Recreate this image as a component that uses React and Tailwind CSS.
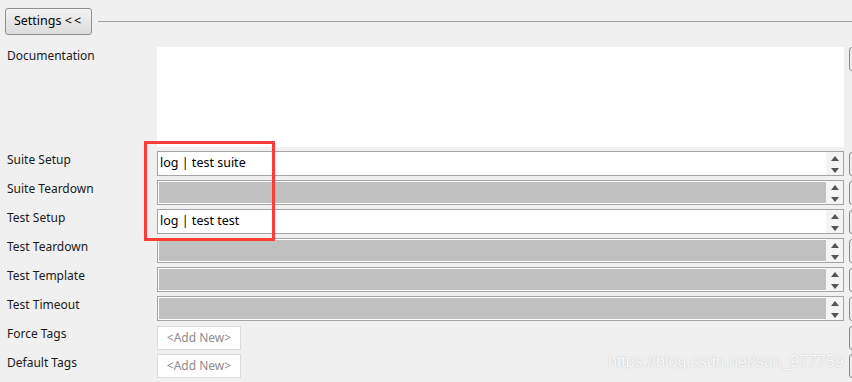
import { useState } from 'react';

const font = { fontFamily: '"Noto Sans", "Liberation Sans", sans-serif' };

function Spin() {
  return (
    <div className="flex flex-col items-center justify-between w-[17px] self-stretch bg-[#f4f4f4] pt-[4px] pb-[2px]">
      <svg width="8" height="5" viewBox="0 0 8 5">
        <polygon points="4,0 8,5 0,5" fill="#555555" />
      </svg>
      <svg width="8" height="5" viewBox="0 0 8 5">
        <polygon points="0,0 8,0 4,5" fill="#555555" />
      </svg>
    </div>
  );
}

function SideButton() {
  return <div className="w-[15px] h-[24px] shrink-0 border border-[#8a8a8a] rounded-[3px] bg-[#ececec]" />;
}

function Field({ value, disabled }) {
  return (
    <div className="flex items-center gap-[5px]">
      <div
        className={`flex-1 flex h-[25px] border border-[#a5a5a5] ${
          disabled ? 'bg-[#c0c0c0] shadow-[inset_0_0_0_1px_#ffffff]' : 'bg-white'
        }`}
      >
        <div className="flex-1 flex items-center pl-[2px] text-[12.5px] text-black">{value}</div>
        <Spin />
      </div>
      <SideButton />
    </div>
  );
}

function AddNew() {
  return (
    <div className="w-[84px] h-[24px] bg-white border border-[#dcdcdc] flex items-center justify-center text-[12px] text-[#8c8c8c]">
      &lt;Add New&gt;
    </div>
  );
}

export default function App() {
  const [open, setOpen] = useState(true);

  const rows = [
    { label: 'Suite Setup', value: 'log | test suite' },
    { label: 'Suite Teardown', disabled: true },
    { label: 'Test Setup', value: 'log | test test' },
    { label: 'Test Teardown', disabled: true },
    { label: 'Test Template', disabled: true },
    { label: 'Test Timeout', disabled: true },
  ];

  return (
    <div className="relative w-[852px] h-[382px] overflow-hidden bg-[#f0f0f0] text-[#1a1a1a]" style={font}>
      {/* Header */}
      <div className="flex items-center pt-[8px] pl-[5px]">
        <button
          onClick={() => setOpen(!open)}
          className="w-[87px] h-[27px] rounded-[3px] border border-[#8e8f8f] bg-gradient-to-b from-[#f3f3f3] to-[#dcdcdc] text-[12.5px] text-black"
        >
          Settings <span className="tracking-[2px]">&lt;&lt;</span>
        </button>
        <div className="flex-1 ml-[6px] h-px bg-[#a0a0a0]" />
      </div>

      {/* Form */}
      <div className="grid grid-cols-[157px_1fr] mt-[12px] text-[12px] gap-y-[4px]">
        <div className="pl-[7px] pt-[1px] leading-[16px]">Documentation</div>
        <div className="flex gap-[5px] mr-[-12px]">
          <div className="flex-1 h-[100px] bg-white" />
          <SideButton />
        </div>

        {rows.map((r) => (
          <div key={r.label} className="contents">
            <div className="pl-[7px] pt-[1px] leading-[16px]">{r.label}</div>
            <div className="mr-[-12px]">
              <Field value={r.value} disabled={r.disabled} />
            </div>
          </div>
        ))}

        <div className="pl-[7px] pt-[1px] leading-[16px]">Force Tags</div>
        <div className="flex justify-between mr-[-12px] mt-[1px]">
          <AddNew />
          <SideButton />
        </div>
        <div className="pl-[7px] pt-[1px] leading-[16px]">Default Tags</div>
        <div className="flex justify-between mr-[-12px]">
          <AddNew />
          <SideButton />
        </div>
      </div>

      {/* Red highlight overlay */}
      <div className="absolute left-[144px] top-[141px] w-[131px] h-[100px] border-[3px] border-[#ff3b3b] pointer-events-none" />

      {/* Watermark */}
      <div
        className="absolute left-[608px] top-[350px] text-[16px] text-[#fafafa] pointer-events-none"
        style={{ fontFamily: '"Liberation Sans", Arial, sans-serif', textShadow: '0 0 1.5px #b8b8b8' }}
      >
        https://blog.csdn.net/sun_977759
      </div>
    </div>
  );
}
